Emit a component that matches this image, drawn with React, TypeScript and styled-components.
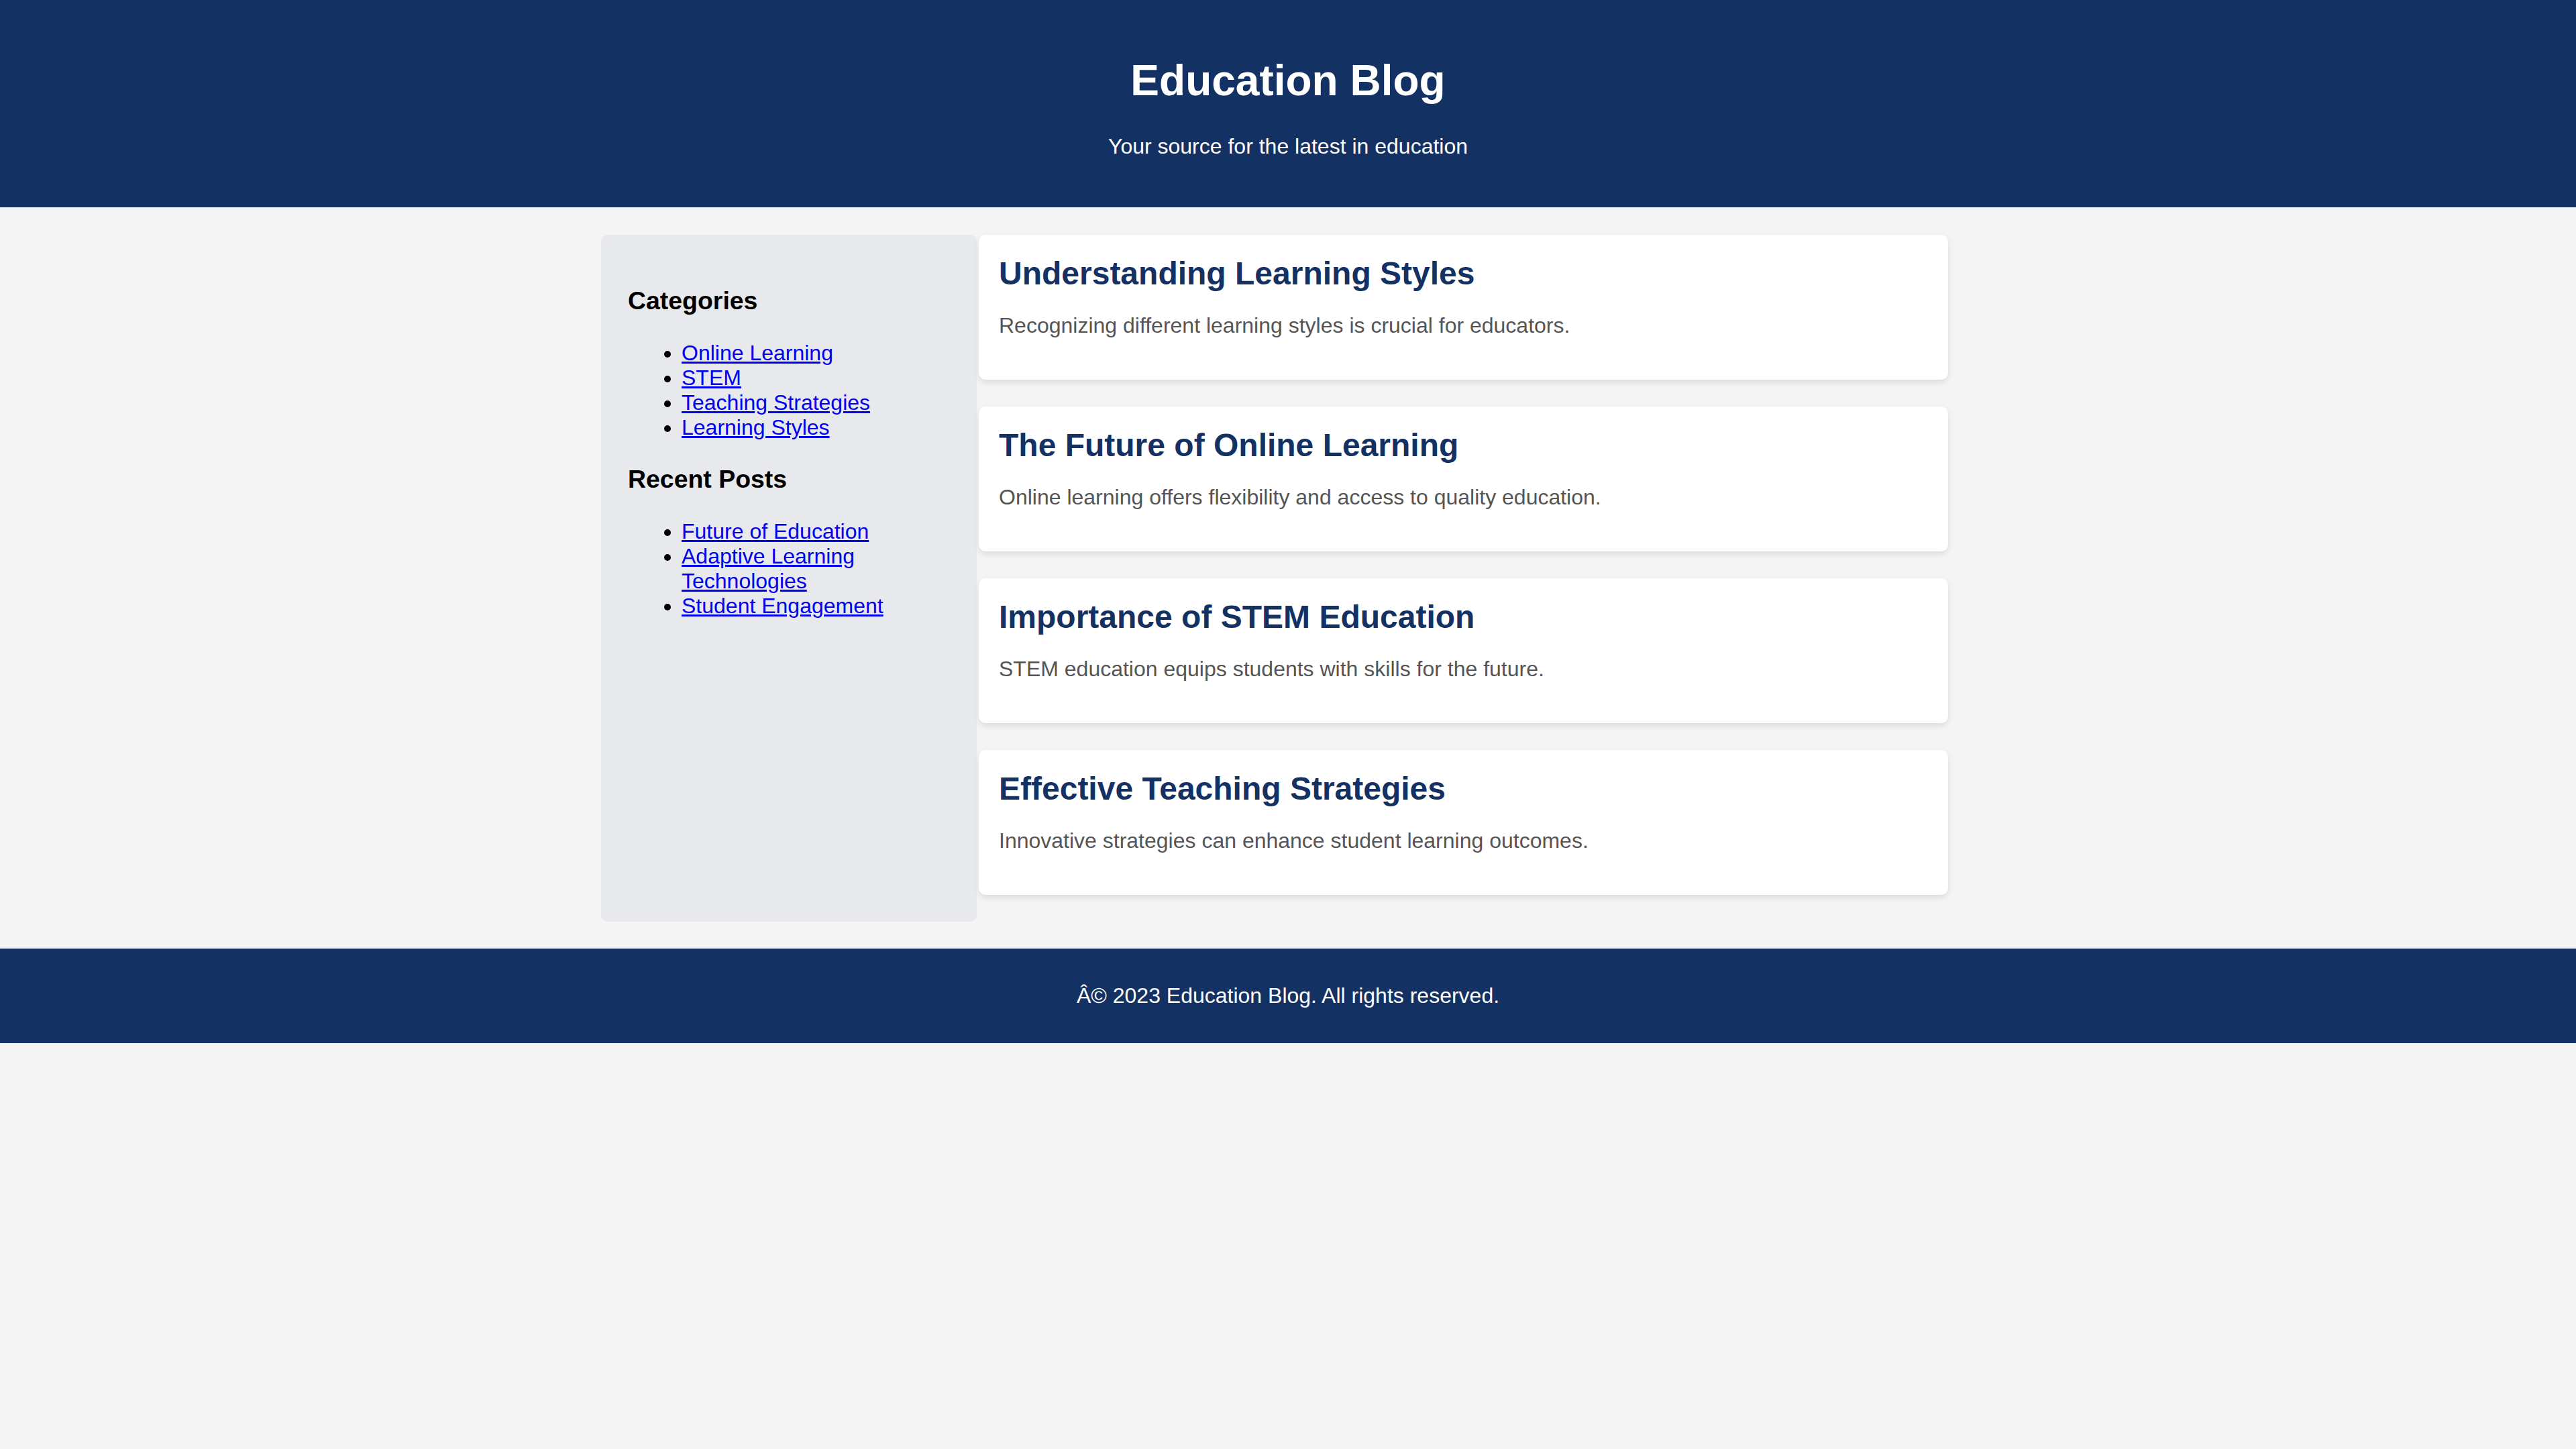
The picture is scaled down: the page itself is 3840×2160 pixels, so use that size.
import React from "react";
import styled, { createGlobalStyle } from "styled-components";

const GlobalStyle = createGlobalStyle`
  html, body {
    margin: 0;
    padding: 0;
    background: #f4f4f4;
    font-family: "Liberation Sans", Arial, Helvetica, sans-serif;
  }
`;

const NAVY = "#133163";

const Header = styled.header`
  background: ${NAVY};
  color: #ffffff;
  text-align: center;
  padding: 40px;
`;

const SiteTitle = styled.h1`
  font-size: 64px;
  font-weight: bold;
  line-height: normal;
  margin: 43px 0;
`;

const Tagline = styled.p`
  font-size: 32px;
  line-height: normal;
  margin: 32px 0;
`;

const Layout = styled.div`
  display: flex;
  align-items: stretch;
  width: 2048px;
  margin: 41px auto 40px;
`;

const Sidebar = styled.aside`
  flex: 0 0 560px;
  box-sizing: border-box;
  background: #e8e9ed;
  border-radius: 10px;
  padding: 40px;
  font-size: 32px;
`;

const SideHeading = styled.h3`
  font-size: 37.44px;
  font-weight: bold;
  line-height: normal;
  margin: 37.44px 0;
  color: #000000;
`;

const LinkList = styled.ul`
  list-style: disc;
  margin: 32px 0;
  padding-left: 80px;
  line-height: normal;
`;

const LinkItem = styled.li`
  color: #000000;
`;

const SideLink = styled.a`
  color: #0000ee;
  text-decoration: underline;
`;

const Posts = styled.main`
  flex: 1;
  margin: 0 40px 0 3px;
  display: flex;
  flex-direction: column;
`;

const Card = styled.article`
  background: #ffffff;
  border-radius: 10px;
  padding: 30px;
  margin-bottom: 40px;
  box-shadow: 0 4px 10px rgba(0, 0, 0, 0.1);
`;

const CardTitle = styled.h2`
  font-size: 48px;
  font-weight: bold;
  line-height: normal;
  color: ${NAVY};
  margin: 0;
`;

const CardText = styled.p`
  font-size: 32px;
  line-height: normal;
  color: #555555;
  margin: 32px 0;
`;

const Footer = styled.footer`
  background: ${NAVY};
  color: #ffffff;
  text-align: center;
  padding: 20px;
`;

const FooterText = styled.p`
  font-size: 32px;
  line-height: normal;
  margin: 32px 0;
`;

const categories = ["Online Learning", "STEM", "Teaching Strategies", "Learning Styles"];
const recent = ["Future of Education", "Adaptive Learning Technologies", "Student Engagement"];

const posts = [
  {
    title: "Understanding Learning Styles",
    text: "Recognizing different learning styles is crucial for educators.",
  },
  {
    title: "The Future of Online Learning",
    text: "Online learning offers flexibility and access to quality education.",
  },
  {
    title: "Importance of STEM Education",
    text: "STEM education equips students with skills for the future.",
  },
  {
    title: "Effective Teaching Strategies",
    text: "Innovative strategies can enhance student learning outcomes.",
  },
];

export default function App() {
  return (
    <>
      <GlobalStyle />
      <Header>
        <SiteTitle>Education Blog</SiteTitle>
        <Tagline>Your source for the latest in education</Tagline>
      </Header>
      <Layout>
        <Sidebar>
          <SideHeading>Categories</SideHeading>
          <LinkList>
            {categories.map((c) => (
              <LinkItem key={c}>
                <SideLink href="#">{c}</SideLink>
              </LinkItem>
            ))}
          </LinkList>
          <SideHeading>Recent Posts</SideHeading>
          <LinkList>
            {recent.map((r) => (
              <LinkItem key={r}>
                <SideLink href="#">{r}</SideLink>
              </LinkItem>
            ))}
          </LinkList>
        </Sidebar>
        <Posts>
          {posts.map((p) => (
            <Card key={p.title}>
              <CardTitle>{p.title}</CardTitle>
              <CardText>{p.text}</CardText>
            </Card>
          ))}
        </Posts>
      </Layout>
      <Footer>
        <FooterText>Â© 2023 Education Blog. All rights reserved.</FooterText>
      </Footer>
    </>
  );
}
